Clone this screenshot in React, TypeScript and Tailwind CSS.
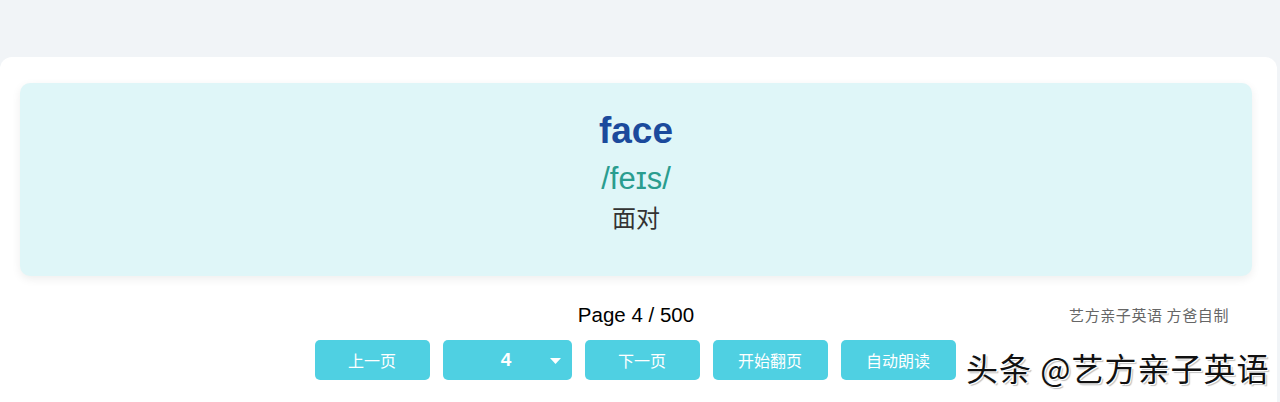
import { useState } from 'react';

const btn =
  'w-[115px] h-10 rounded-[5px] bg-[#4fd0e2] text-white text-[16px] flex items-center justify-center';

export default function App() {
  const [page] = useState(4); //current page
  const total = 500;

  return (
    <div
      className="h-[402px] overflow-hidden bg-[#f1f4f7] pt-[57px]"
      style={{ fontFamily: '"Liberation Sans", "Noto Sans CJK SC", sans-serif' }}
    >
      <div className="relative mr-[3px] h-[400px] rounded-t-xl bg-white pl-5 pr-[25px] pt-[26px]">
        {/* word card */}
        <div className="flex h-[193px] flex-col items-center rounded-[10px] bg-[#dff6f8] pt-[26px] shadow-[0_3px_10px_rgba(0,0,0,0.07)]">
          <div className="text-[37px] font-bold leading-[1.2] text-[#1b4a9c]">face</div>
          <div className="mt-[7px] text-[31px] leading-[1.2] text-[#2a9d8f]">/feɪs/</div>
          <div
            className="mt-[5px] text-[24px] leading-[1.2] text-[#333]"
            style={{ fontFamily: '"Noto Sans CJK SC", sans-serif' }}
          >
            面对
          </div>
        </div>

        <div className="relative mt-[27px] text-center text-[20.5px] leading-6 text-black">
          Page {page} / {total}
          <span
            className="absolute right-[23px] top-0 text-[15px] leading-6 tracking-[0.6px] text-[#666]"
            style={{ fontFamily: '"Noto Sans CJK SC", sans-serif' }}
          >
            艺方亲子英语 方爸自制
          </span>
        </div>

        {/* controls */}
        <div
          className="mt-[13px] flex justify-center gap-[13px] pr-[2px]"
          style={{ fontFamily: '"Noto Sans CJK SC", sans-serif' }}
        >
          <button className={btn}>上一页</button>
          <div className="relative flex h-10 w-[129px] items-center justify-center rounded-[5px] bg-[#4fd0e2] pr-[2px] text-white">
            <span className="text-[19px] font-bold" style={{ fontFamily: '"Liberation Sans", sans-serif' }}>
              {page}
            </span>
            <svg className="absolute right-[11px] top-[18px]" width="11" height="6" viewBox="0 0 11 6">
              <path d="M0 0h11L5.5 6z" fill="#fff" />
            </svg>
          </div>
          <button className={btn}>下一页</button>
          <button className={btn}>开始翻页</button>
          <button className={btn}>自动朗读</button>
        </div>

        {/* watermark */}
        <div
          className="absolute left-[966px] top-[294px] whitespace-nowrap text-[32px] leading-none tracking-[1px] text-[#111] [text-shadow:1px_1px_0_#fff,-1px_-1px_0_#fff,2px_2px_1px_rgba(0,0,0,0.25)]"
          style={{ fontFamily: '"Noto Sans CJK SC", sans-serif' }}
        >
          头条 @艺方亲子英语
        </div>
      </div>
    </div>
  );
}
